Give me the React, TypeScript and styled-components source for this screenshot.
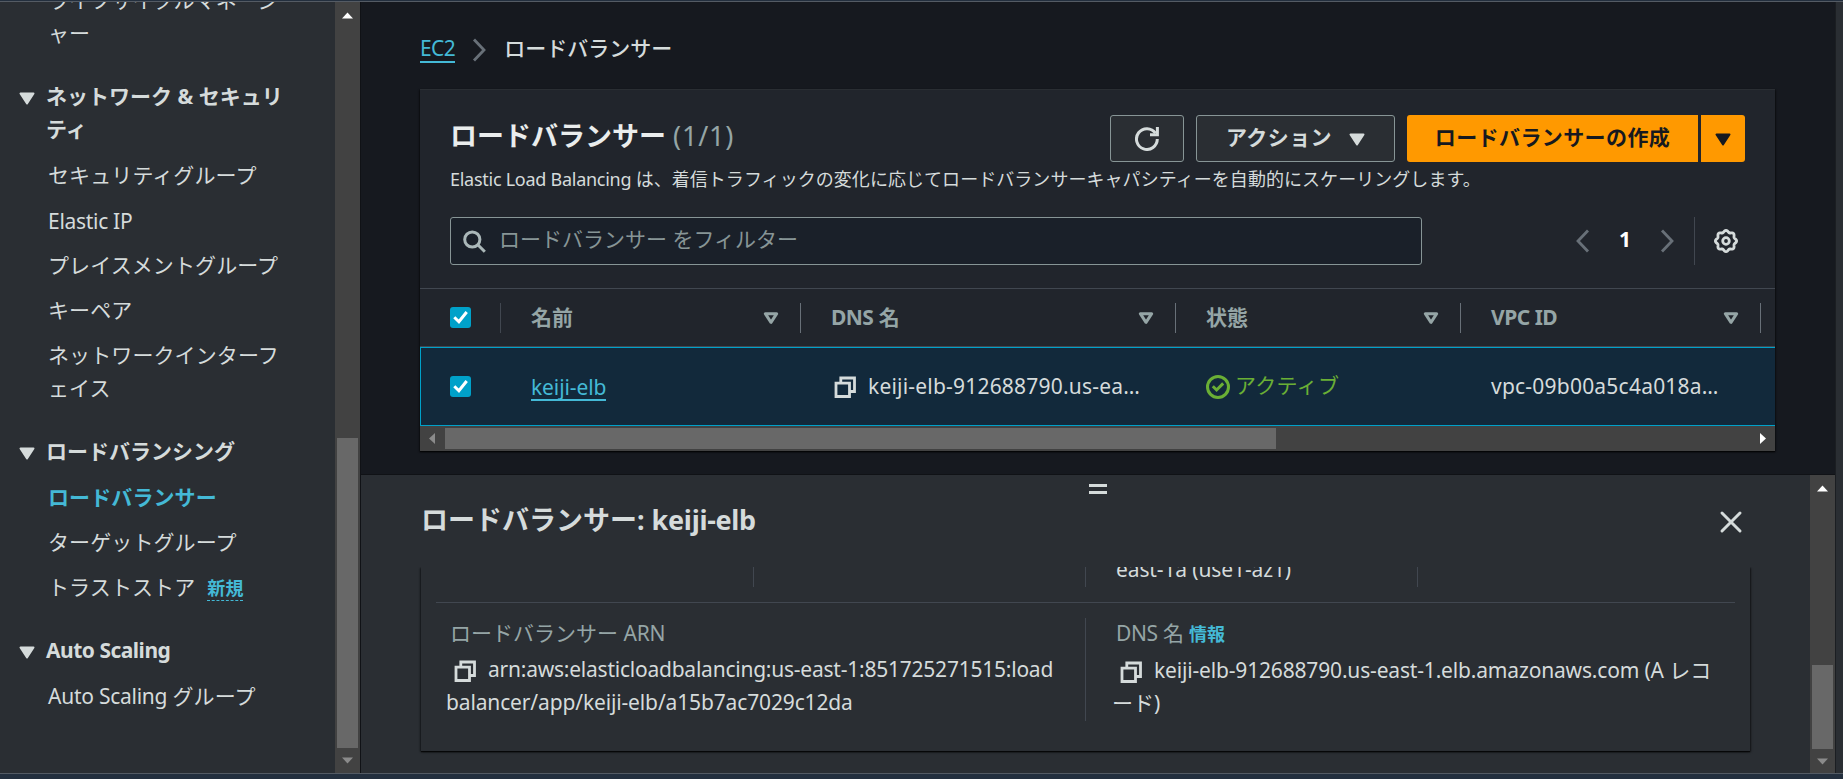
import React from 'react';
import styled, { createGlobalStyle, css } from 'styled-components';

const color = {
  page: '#16191f',
  layer: '#2a2e33',
  container: '#21252c',
  frame: '#232f3e',
  frameLine: '#545b64',
  divider: '#414750',
  dividerStrong: '#687078',
  text: '#d5dbdb',
  heading: '#eaeded',
  muted: '#95a5a6',
  border: '#879596',
  link: '#44b9d6',
  accent: '#00a1c9',
  primary: '#ff9900',
  success: '#6aaf35',
};

const GlobalStyle = createGlobalStyle`
  * { box-sizing: border-box; }
  body {
    margin: 0;
    background: ${color.frame};
    color: ${color.text};
    font: 400 21px/33px "Noto Sans", "Noto Sans CJK JP", sans-serif;
    overflow: hidden;
  }
  ul, h1, h2, p { margin: 0; padding: 0; list-style: none; }
`;

const Frame = styled.div`
  width: 1843px;
  height: 779px;
  padding: 1px 0 5px;
  background: ${color.frame};
`;

const Workspace = styled.div`
  display: flex;
  height: 773px;
  border-top: 1px solid ${color.frameLine};
  border-bottom: 1px solid ${color.frameLine};
  overflow: hidden;
`;

const Latin = styled.span<{ $track?: number; $drop?: number }>`
  letter-spacing: ${(p) => p.$track ?? -0.22}px;
  ${(p) => p.$drop && css`line-height: 1; vertical-align: -${p.$drop}px;`}
`;

/* ---------- scroll bars ---------- */

const Track = styled.div<{ $horizontal?: boolean }>`
  display: flex;
  flex: none;
  flex-direction: ${(p) => (p.$horizontal ? 'row' : 'column')};
  align-items: center;
  background: #424242;
  ${(p) => (p.$horizontal ? css`height: 25px;` : css`width: 25px;`)}
`;

const ArrowBox = styled.div`
  display: flex;
  flex: none;
  align-items: center;
  justify-content: center;
  width: 25px;
  height: 25px;
`;

const Thumb = styled.div<{ $length: number; $offset: number; $horizontal?: boolean }>`
  flex: none;
  background: #686868;
  ${(p) =>
    p.$horizontal
      ? css`width: ${p.$length}px; height: 21px; margin-left: ${p.$offset}px;`
      : css`height: ${p.$length}px; width: 21px; margin-top: ${p.$offset}px;`}
`;

const Spacer = styled.div`
  flex: 1;
`;

const arrowPaths = {
  up: 'M7 16.5h11L12.5 10.5z',
  down: 'M7 9.5h11L12.5 15.5z',
  left: 'M15 7v11L9 12.5z',
  right: 'M10 7v11L16 12.5z',
};

function Arrow({ dir, active }: { dir: keyof typeof arrowPaths; active?: boolean }) {
  return (
    <ArrowBox>
      <svg width="25" height="25" viewBox="0 0 25 25">
        <path d={arrowPaths[dir]} fill={active ? '#fff' : '#8b8b8b'} />
      </svg>
    </ArrowBox>
  );
}

function ScrollBar({ length, offset, horizontal }: { length: number; offset: number; horizontal?: boolean }) {
  return (
    <Track $horizontal={horizontal}>
      <Arrow dir={horizontal ? 'left' : 'up'} active={!horizontal} />
      <Thumb $length={length} $offset={offset} $horizontal={horizontal} />
      <Spacer />
      <Arrow dir={horizontal ? 'right' : 'down'} active={horizontal} />
    </Track>
  );
}

/* ---------- icons ---------- */

const Icon = styled.svg.attrs({ width: 24, height: 24, viewBox: '0 0 24 24' })<{ $tone?: string }>`
  display: block;
  flex: none;
  fill: none;
  stroke: ${(p) => p.$tone ?? color.text};
  stroke-width: 3;
`;

const CaretIcon = ({ tone }: { tone?: string }) => (
  <Icon $tone={tone}>
    <path d="M5.5 7.5h13L12 17.5z" fill={tone ?? color.text} strokeWidth="2" strokeLinejoin="round" />
  </Icon>
);

const SortIcon = () => (
  <Icon $tone={color.muted}>
    <path d="M6.3 7.7h11.4L12 16.3z" strokeLinejoin="round" />
  </Icon>
);

const CopyIcon = () => (
  <Icon>
    <path d="M3 8.2h13.5V21.5H3zM7.8 8V3h13.7v13.5h-5" strokeWidth="2.8" />
  </Icon>
);

const SearchIcon = () => (
  <Icon $tone="#aab7b8">
    <circle cx="10.3" cy="10.5" r="7.6" />
    <path d="M15.8 15.8l7 7" />
  </Icon>
);

const RefreshIcon = () => (
  <Icon>
    <path d="M22.3 12A10.4 10.4 0 1 1 20.5 6.2" />
    <path d="M15 7.8h7.4V0" />
  </Icon>
);

const CheckCircleIcon = () => (
  <Icon $tone={color.success}>
    <circle cx="12" cy="12" r="10.5" />
    <path d="M6.8 11.2l3.8 3.8 6.6-6.6" />
  </Icon>
);

const CloseIcon = () => (
  <Icon>
    <path d="M3 3l18 18M21 3L3 21" strokeLinecap="round" />
  </Icon>
);

const ChevronIcon = ({ left, tone = '#687078' }: { left?: boolean; tone?: string }) => (
  <Icon $tone={tone}>
    <path d={left ? 'M17 1.5L7 12l10 10.5' : 'M7 1.5L17 12 7 22.5'} strokeWidth="2.8" />
  </Icon>
);

const gearOutline =
  Array.from({ length: 96 }, (_, i) => {
    const a = (i / 96) * Math.PI * 2;
    const r = 9.7 + 0.9 * Math.cos(a * 8);
    return `${i ? 'L' : 'M'}${(12 + r * Math.cos(a)).toFixed(2)} ${(12 + r * Math.sin(a)).toFixed(2)}`;
  }).join('') + 'z';

const GearIcon = () => (
  <Icon>
    <path d={gearOutline} strokeWidth="2.8" />
    <circle cx="12" cy="12" r="3.3" strokeWidth="2.8" />
  </Icon>
);

/* ---------- side navigation ---------- */

const SideNav = styled.nav`
  width: 335px;
  flex: none;
  background: ${color.layer};
  overflow: hidden;
`;

const NavGroup = styled.div<{ $first?: boolean }>`
  margin-top: ${(p) => (p.$first ? -18 : 30)}px;
`;

const NavHeading = styled.div`
  display: flex;
  align-items: flex-start;
  gap: 7px;
  width: 310px;
  padding-left: 15px;
  margin-bottom: 13px;
  font-weight: 700;

  svg { margin-top: 6px; }
`;

const NavList = styled.ul`
  display: flex;
  flex-direction: column;
  gap: 12px;
  padding-left: 48px;
`;

const NavItem = styled.li<{ $active?: boolean }>`
  width: 250px;
  letter-spacing: 0.1px;
  ${(p) => p.$active && css`color: ${color.link}; font-weight: 700;`}
`;

const NewBadge = styled.span`
  display: inline-block;
  height: 27px;
  margin-left: 12px;
  border-bottom: 1px dashed ${color.link};
  color: ${color.link};
  font-size: 18px;
  font-weight: 700;
  line-height: 28px;
`;

/* ---------- main column ---------- */

const Main = styled.main`
  display: flex;
  flex-direction: column;
  width: 1475px;
  flex: none;
  background: ${color.page};
  border-left: 1px solid #101216;
`;

const ToolsRail = styled.aside`
  flex: 1;
  background: ${color.layer};
  border-left: 1px solid #1b1e22;
`;

const ListPane = styled.section`
  height: 473px;
  padding: 29px 60px 0 59px;
  border-bottom: 1px solid #101216;
`;

const Breadcrumbs = styled.div`
  display: flex;
  align-items: center;
  height: 33px;
`;

const UnderlinedLink = styled.span`
  height: 31px;
  border-bottom: 2px solid ${color.link};
  color: ${color.link};
  line-height: 32px;
`;

const RowLink = styled(UnderlinedLink)`
  height: 30px;
  margin-bottom: 1px;
`;

const Crumb = styled.span`
  font-weight: 500;
  font-family: "Noto Sans CJK JP", sans-serif;
  line-height: 30px;
  margin: 0 0 2px 13px;
`;

const CrumbSeparator = styled.span`
  margin: 5px 0 0 12px;
`;

const Card = styled.div`
  height: 362px;
  margin-top: 25px;
  background: ${color.container};
  border-top: 1px solid #2a2e33;
  box-shadow: 0 1px 1px rgba(0, 0, 0, 0.6), 1px 1px 2px rgba(0, 0, 0, 0.4), -1px 1px 2px rgba(0, 0, 0, 0.4);
`;

const CardHeader = styled.div`
  display: flex;
  justify-content: space-between;
  height: 72px;
  padding: 25px 30px 0;
`;

const Title = styled.h1`
  color: ${color.heading};
  font: 700 27px/39px "Noto Sans CJK JP", sans-serif;
`;

const Counter = styled.span`
  margin-left: 7px;
  color: ${color.muted};
  font-family: "Noto Sans", sans-serif;
  font-weight: 400;
  letter-spacing: 0.8px;
`;

const Actions = styled.div`
  display: flex;
  gap: 12px;
`;

const Button = styled.button<{ $width: number }>`
  display: flex;
  align-items: center;
  justify-content: center;
  width: ${(p) => p.$width}px;
  height: 47px;
  padding: 0;
  border: 1px solid ${color.border};
  border-radius: 3px;
  background: ${color.layer};
  color: ${color.text};
  font: 700 21px/33px "Noto Sans CJK JP", sans-serif;
  letter-spacing: 0.4px;
`;

const ButtonLabel = styled.span`
  margin-bottom: 4px;
`;

const ButtonCaret = styled.span`
  display: flex;
  justify-content: center;
  width: 16px;
  margin-left: 17px;
`;

const SplitButton = styled.div`
  display: flex;
  gap: 3px;
`;

const PrimaryButton = styled(Button)<{ $side: 'left' | 'right' }>`
  border: 0;
  background: ${color.primary};
  color: #16191f;
  border-radius: ${(p) => (p.$side === 'left' ? '3px 0 0 3px' : '0 3px 3px 0')};
`;

const Description = styled.p`
  padding-left: 30px;
  height: 30px;
  margin-top: 2px;
  font-size: 18px;
  line-height: 30px;
  letter-spacing: 0.05px;
`;

const FilterRow = styled.div`
  display: flex;
  align-items: center;
  justify-content: space-between;
  height: 49px;
  margin: 22px 37px 0 30px;
`;

const FilterInput = styled.div`
  display: flex;
  align-items: center;
  width: 972px;
  height: 48px;
  padding: 0 11px;
  gap: 13px;
  border: 1px solid ${color.border};
  border-radius: 3px;
  background: #1a2029;
  color: ${color.border};
  line-height: 40px;
`;

const Placeholder = styled.span`
  height: 44px;
`;

const Pager = styled.div`
  display: flex;
  align-items: center;
  height: 48px;
`;

const PageNumber = styled.span`
  width: 60px;
  color: #fff;
  font-weight: 700;
  line-height: 44px;
  height: 48px;
  text-align: center;
`;

const PagerDivider = styled.span`
  width: 1px;
  height: 48px;
  margin: 0 19px 0 15px;
  background: ${color.divider};
`;

const TableHead = styled.div`
  display: flex;
  align-items: center;
  height: 59px;
  margin-top: 23px;
  border-top: 1px solid ${color.divider};
  border-bottom: 1px solid ${color.divider};
  color: ${color.muted};
  font-weight: 700;
`;

const TableRow = styled.div`
  display: flex;
  align-items: center;
  height: 79px;
  border: 1px solid ${color.accent};
  border-right: 0;
  background: #12293b;
`;

const HeadCell = styled.div<{ $width: number; $faint?: boolean }>`
  display: flex;
  align-items: center;
  justify-content: space-between;
  width: ${(p) => p.$width}px;
  height: 30px;
  padding: 0 17px 0 30px;
  border-right: 1px solid ${(p) => (p.$faint ? color.divider : color.dividerStrong)};
`;

const Cell = styled.div<{ $width: number; $indent?: number; $gap?: number; $tone?: string }>`
  display: flex;
  align-items: center;
  gap: ${(p) => p.$gap ?? 0}px;
  width: ${(p) => p.$width}px;
  padding-left: ${(p) => p.$indent ?? 30}px;
  color: ${(p) => p.$tone ?? color.text};
  white-space: nowrap;
`;

const StatusLabel = styled.span`
  margin-bottom: 3px;
  letter-spacing: 0.3px;
`;

const CheckMark = styled.span`
  display: flex;
  width: 21px;
  height: 21px;
  border-radius: 3px;
  background: ${color.accent};
`;

function Checkbox() {
  return (
    <CheckMark>
      <svg width="21" height="21" viewBox="0 0 21 21">
        <path d="M4.3 10.2l4.6 4.6 7.8-9.8" fill="none" stroke="#fff" strokeWidth="3" />
      </svg>
    </CheckMark>
  );
}

/* ---------- details panel ---------- */

const DetailPane = styled.section`
  display: flex;
  height: 298px;
  background: ${color.layer};
`;

const DetailColumn = styled.div`
  display: flex;
  flex-direction: column;
  width: 1449px;
`;

const DragHandle = styled.div`
  display: flex;
  flex-direction: column;
  gap: 4px;
  width: 18px;
  margin: 9px 0 0 728px;

  &::before, &::after {
    content: '';
    height: 3px;
    background: ${color.text};
  }
`;

const DetailHeader = styled.div`
  display: flex;
  align-items: center;
  justify-content: space-between;
  height: 41px;
  margin: 7px 67px 0 60px;
`;

const DetailTitle = styled.h2`
  height: 41px;
  font: 700 27px/38px "Noto Sans", "Noto Sans CJK JP", sans-serif;
`;

const DetailViewport = styled.div`
  flex: 1;
  margin-top: 25px;
  padding: 0 60px 22px;
  overflow: hidden;
`;

const DetailCard = styled.div`
  height: 184px;
  padding: 0 15px;
  box-shadow: 0 1px 1px rgba(0, 0, 0, 0.65), 1px 1px 2px rgba(0, 0, 0, 0.5), -1px 1px 2px rgba(0, 0, 0, 0.4);
`;

const PartialRow = styled.div`
  display: grid;
  grid-template-columns: 318px 332px 332px 1fr;
  height: 36px;
  border-bottom: 1px solid ${color.divider};
`;

const PartialCell = styled.div<{ $last?: boolean; $indent?: number }>`
  height: 20px;
  padding-left: ${(p) => p.$indent ?? 0}px;
  border-right: ${(p) => (p.$last ? 0 : 1)}px solid ${color.divider};
  line-height: 33px;

  span { display: block; margin-top: -14px; }
`;

const DetailRow = styled.div`
  display: grid;
  grid-template-columns: 650px 1fr;
  margin-top: 15px;
`;

const Field = styled.div<{ $divided?: boolean; $indent: number }>`
  height: 103px;
  padding-left: ${(p) => p.$indent}px;
  border-right: ${(p) => (p.$divided ? 1 : 0)}px solid ${color.divider};
`;

const FieldLabel = styled.div`
  margin: -1px 0 3px 4px;
  color: ${color.muted};
`;

const InfoLink = styled.span`
  margin-left: 5px;
  color: ${color.link};
  font-size: 18px;
  font-weight: 700;
`;

const FieldLine = styled.div`
  display: flex;
  align-items: center;
  gap: 11px;
  white-space: nowrap;
`;

const IconInset = styled.span`
  margin: 3px 0 0 7px;
`;

const columns: { label: React.ReactNode; width: number }[] = [
  { label: '名前', width: 300 },
  { label: <span><Latin $track={-0.6}>DNS</Latin> 名</span>, width: 375 },
  { label: '状態', width: 285 },
  { label: <Latin $track={-0.5}>VPC ID</Latin>, width: 300 },
];

export default function App() {
  return (
    <Frame>
      <GlobalStyle />
      <Workspace>
        <SideNav>
          <NavGroup $first>
            <NavList>
              <NavItem>ライフサイクルマネージ<br />ャー</NavItem>
            </NavList>
          </NavGroup>
          <NavGroup>
            <NavHeading><CaretIcon /><span>ネットワーク &amp; セキュリ<br />ティ</span></NavHeading>
            <NavList>
              <NavItem>セキュリティグループ</NavItem>
              <NavItem><Latin $track={-0.3} $drop={1}>Elastic IP</Latin></NavItem>
              <NavItem>プレイスメントグループ</NavItem>
              <NavItem>キーペア</NavItem>
              <NavItem>ネットワークインターフ<br />ェイス</NavItem>
            </NavList>
          </NavGroup>
          <NavGroup>
            <NavHeading><CaretIcon /><span>ロードバランシング</span></NavHeading>
            <NavList>
              <NavItem $active>ロードバランサー</NavItem>
              <NavItem>ターゲットグループ</NavItem>
              <NavItem>トラストストア<NewBadge>新規</NewBadge></NavItem>
            </NavList>
          </NavGroup>
          <NavGroup>
            <NavHeading><CaretIcon /><Latin $track={-0.5}>Auto Scaling</Latin></NavHeading>
            <NavList>
              <NavItem><Latin $track={-0.25}>Auto Scaling </Latin>グループ</NavItem>
            </NavList>
          </NavGroup>
        </SideNav>
        <ScrollBar length={310} offset={411} />

        <Main>
          <ListPane>
            <Breadcrumbs>
              <UnderlinedLink><Latin $track={-0.6}>EC2</Latin></UnderlinedLink>
              <CrumbSeparator><ChevronIcon /></CrumbSeparator>
              <Crumb>ロードバランサー</Crumb>
            </Breadcrumbs>

            <Card>
              <CardHeader>
                <Title>ロードバランサー<Counter>(1/1)</Counter></Title>
                <Actions>
                  <Button $width={74}><RefreshIcon /></Button>
                  <Button $width={199}>
                    <ButtonLabel>アクション</ButtonLabel>
                    <ButtonCaret><CaretIcon /></ButtonCaret>
                  </Button>
                  <SplitButton>
                    <PrimaryButton $width={291} $side="left"><ButtonLabel>ロードバランサーの作成</ButtonLabel></PrimaryButton>
                    <PrimaryButton $width={44} $side="right"><CaretIcon tone="#16191f" /></PrimaryButton>
                  </SplitButton>
                </Actions>
              </CardHeader>
              <Description>
                <Latin $track={-0.27}>Elastic Load Balancing </Latin>
                は、着信トラフィックの変化に応じてロードバランサーキャパシティーを自動的にスケーリングします。
              </Description>
              <FilterRow>
                <FilterInput>
                  <SearchIcon />
                  <Placeholder>ロードバランサー をフィルター</Placeholder>
                </FilterInput>
                <Pager>
                  <ChevronIcon left />
                  <PageNumber>1</PageNumber>
                  <ChevronIcon />
                  <PagerDivider />
                  <GearIcon />
                </Pager>
              </FilterRow>
              <TableHead>
                <HeadCell $width={81} $faint><Checkbox /></HeadCell>
                {columns.map((c, i) => (
                  <HeadCell key={i} $width={c.width}>{c.label}<SortIcon /></HeadCell>
                ))}
              </TableHead>
              <TableRow>
                <Cell $width={80} $indent={29}><Checkbox /></Cell>
                <Cell $width={300}><RowLink><Latin $track={-0.1}>keiji-elb</Latin></RowLink></Cell>
                <Cell $width={375} $indent={32} $gap={11}><CopyIcon /><Latin $track={0.2}>keiji-elb-912688790.us-ea…</Latin></Cell>
                <Cell $width={285} $gap={5} $tone={color.success}><CheckCircleIcon /><StatusLabel>アクティブ</StatusLabel></Cell>
                <Cell $width={300}><Latin $track={0.22}>vpc-09b00a5c4a018a…</Latin></Cell>
              </TableRow>
              <ScrollBar horizontal length={831} offset={0} />
            </Card>
          </ListPane>

          <DetailPane>
            <DetailColumn>
              <DragHandle />
              <DetailHeader>
                <DetailTitle>ロードバランサー: <Latin $track={-0.3}>keiji-elb</Latin></DetailTitle>
                <CloseIcon />
              </DetailHeader>
              <DetailViewport>
                <DetailCard>
                  <PartialRow>
                    <PartialCell />
                    <PartialCell />
                    <PartialCell $indent={30}><span><Latin $track={-0.12}>east-1a (use1-az1)</Latin></span></PartialCell>
                    <PartialCell $last />
                  </PartialRow>
                  <DetailRow>
                    <Field $divided $indent={10}>
                      <FieldLabel>ロードバランサー <Latin>ARN</Latin></FieldLabel>
                      <FieldLine>
                        <IconInset><CopyIcon /></IconInset>
                        <Latin $track={-0.23}>arn:aws:elasticloadbalancing:us-east-1:851725271515:load</Latin>
                      </FieldLine>
                      <FieldLine><Latin $track={-0.14}>balancer/app/keiji-elb/a15b7ac7029c12da</Latin></FieldLine>
                    </Field>
                    <Field $indent={26}>
                      <FieldLabel><Latin $track={-0.4}>DNS</Latin> 名<InfoLink>情報</InfoLink></FieldLabel>
                      <FieldLine>
                        <IconInset><CopyIcon /></IconInset>
                        <span><Latin $track={-0.17}>keiji-elb-912688790.us-east-1.elb.amazonaws.com (A</Latin> レコ</span>
                      </FieldLine>
                      <FieldLine>ード)</FieldLine>
                    </Field>
                  </DetailRow>
                </DetailCard>
              </DetailViewport>
            </DetailColumn>
            <ScrollBar length={84} offset={165} />
          </DetailPane>
        </Main>
        <ToolsRail />
      </Workspace>
    </Frame>
  );
}
